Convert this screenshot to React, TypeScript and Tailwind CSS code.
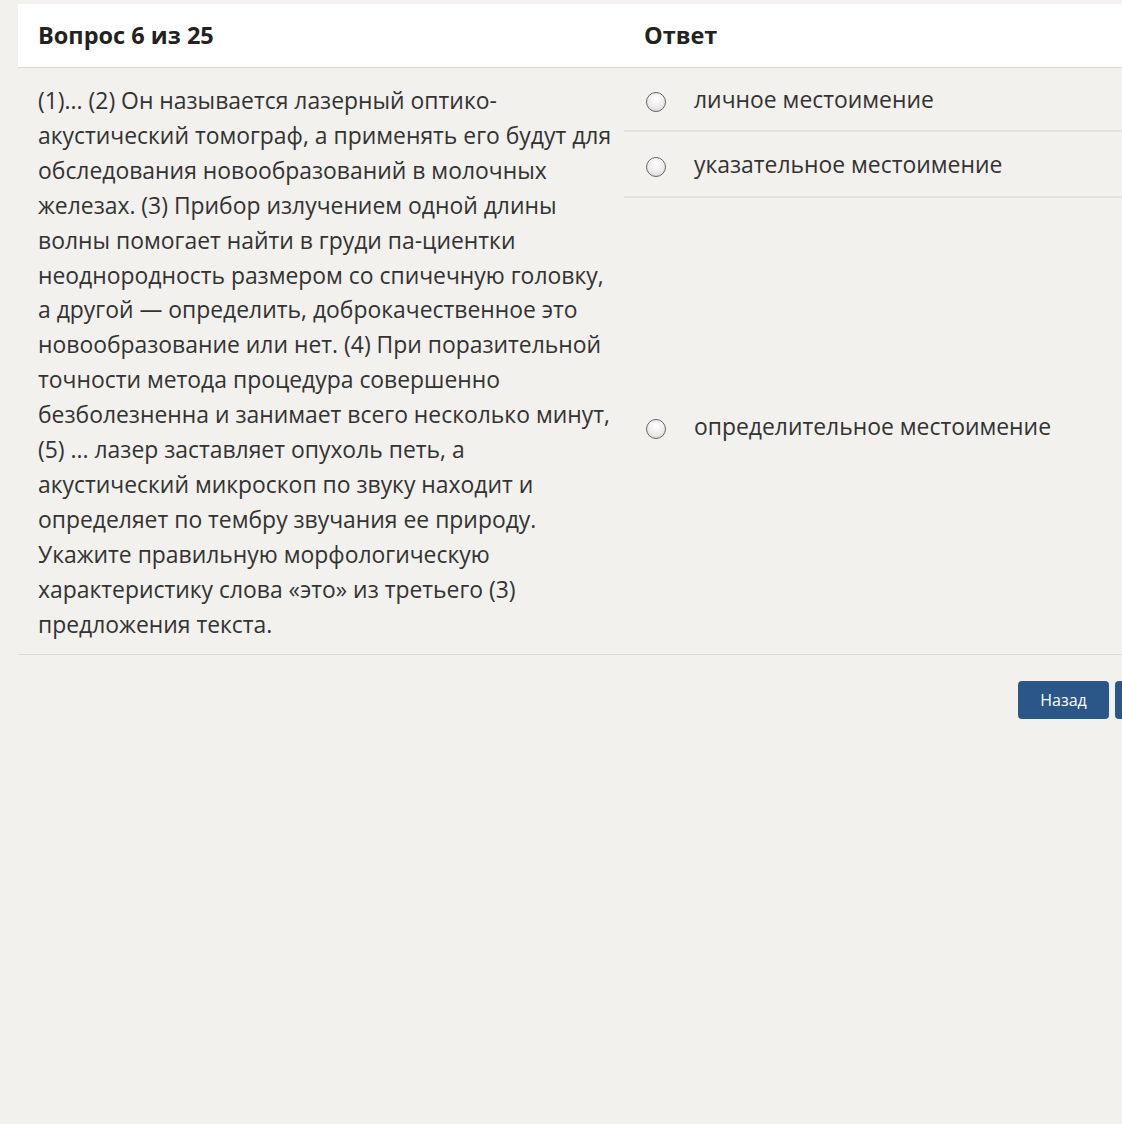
import React from "react";

const lines = [
  "(1)... (2) Он называется лазерный оптико-",
  "акустический томограф, а применять его будут для",
  "обследования новообразований в молочных",
  "железах. (3) Прибор излучением одной длины",
  "волны помогает найти в груди па-циентки",
  "неоднородность размером со спичечную головку,",
  "а другой — определить, доброкачественное это",
  "новообразование или нет. (4) При поразительной",
  "точности метода процедура совершенно",
  "безболезненна и занимает всего несколько минут,",
  "(5) ... лазер заставляет опухоль петь, а",
  "акустический микроскоп по звуку находит и",
  "определяет по тембру звучания ее природу.",
  "Укажите правильную морфологическую",
  "характеристику слова «это» из третьего (3)",
  "предложения текста.",
];

function Radio() {
  return (
    <span className="inline-block w-[20px] h-[20px] translate-y-[3px] rounded-full border-[1.5px] border-[#666666] bg-[radial-gradient(circle_at_50%_35%,#ffffff_0%,#ececec_55%,#cfcfcf_100%)] shrink-0" />
  );
}

export default function App() {
  return (
    <div
      className="w-[1122px] h-[1124px] overflow-hidden bg-[#f2f1ed] text-[#333333]"
      style={{ fontFamily: '"Open Sans", "Noto Sans", sans-serif' }}
    >
      <div className="ml-[18px] mt-[4px] w-[1188px]">
        <div className="flex bg-white h-[64px] border-b border-[#dddad4]">
          <div className="w-[606px] pl-[20px] flex items-center text-[23.5px] font-bold text-[#222]">
            Вопрос 6 из 25
          </div>
          <div className="flex-1 pl-[20px] flex items-center text-[23.5px] font-bold text-[#222]">
            Ответ
          </div>
        </div>
        <div className="flex border-b border-[#dddad4]">
          <div className="w-[606px] pl-[20px] pt-[16px] pb-[11px] text-[22.9px] leading-[34.9px]">
            {lines.map((l, i) => (
              <div key={i} className="whitespace-nowrap">
                {l}
              </div>
            ))}
          </div>
          <div className="flex-1 flex flex-col">
            <div className="h-[64px] flex items-center pl-[22px] gap-[28px] border-b-2 border-[#e3e1dc] text-[22.9px]">
              <Radio />
              <span className="translate-y-[1px]">личное местоимение</span>
            </div>
            <div className="h-[66px] flex items-center pl-[22px] gap-[28px] border-b-2 border-[#e3e1dc] text-[22.9px]">
              <Radio />
              <span className="translate-y-[1px]">указательное местоимение</span>
            </div>
            <div className="flex-1 flex items-center pl-[22px] gap-[28px] text-[22.9px]">
              <Radio />
              <span className="translate-y-[1px]">определительное местоимение</span>
            </div>
          </div>
        </div>
        <div className="flex justify-end gap-[6px] mt-[26px]">
          <button className="w-[91px] h-[38px] rounded-[4px] bg-[#2b5788] text-white text-[16px]">
            Назад
          </button>
          <button className="w-[91px] h-[38px] rounded-[4px] bg-[#2b5788] text-white text-[16px]">
            Далее
          </button>
        </div>
      </div>
    </div>
  );
}
